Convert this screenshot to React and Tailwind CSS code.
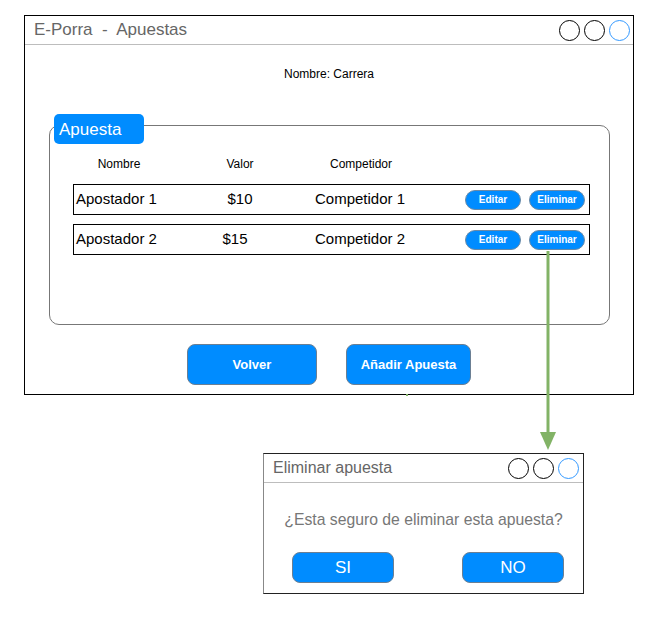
import React from 'react';

const rows = [
  { name: 'Apostador 1', value: '$10', comp: 'Competidor 1', shift: '' },
  { name: 'Apostador 2', value: '$15', comp: 'Competidor 2', shift: 'pr-[10px]' },
];

function WindowDots() {
  return (
    <div className="flex items-center gap-[4px]">
      <span className="w-[21px] h-[21px] rounded-full border border-black" />
      <span className="w-[21px] h-[21px] rounded-full border border-black" />
      <span className="w-[21px] h-[21px] rounded-full border border-[#3399ff]" />
    </div>
  );
}

function SmallBtn({ children, w }) {
  return (
    <button className={`${w} h-[20px] rounded-full bg-[#008cff] border border-[#6b8aa6] text-white text-[10px] font-bold leading-none`}>
      {children}
    </button>
  );
}

export default function App() {
  return (
    <div className="relative w-[650px] h-[639px] bg-white font-['Liberation_Sans',Arial,sans-serif]">
      {/* Main window */}
      <div className="ml-[24px] pt-[15px]">
        <div className="w-[610px] h-[380px] border border-black flex flex-col">
          <div className="h-[29px] border-b border-[#bdbdbd] flex items-center justify-between pl-[9px] pr-[3px] shrink-0">
            <span className="text-[17px] text-[#666] whitespace-pre">E-Porra  -  Apuestas</span>
            <WindowDots />
          </div>

          <div className="text-[12px] text-black text-center mt-[22px] leading-[14px]">Nombre: Carrera</div>

          {/* Group box */}
          <div className="relative ml-[24px] mt-[44px] w-[561px] h-[200px] border border-[#777] rounded-[10px]">
            <div className="absolute left-[4px] top-[-12px] w-[90px] h-[30px] rounded-[5px] bg-[#008cff] text-white text-[17px] flex items-center pl-[5px] pt-[1px]">
              Apuesta
            </div>

            <div className="flex ml-[23px] mt-[31px] text-[12px] text-black leading-[14px]">
              <span className="w-[92px] text-center">Nombre</span>
              <span className="w-[150px] text-center">Valor</span>
              <span className="w-[92px] text-center">Competidor</span>
            </div>

            <div className="flex flex-col gap-[9px] ml-[23px] mt-[13px]">
              {rows.map((r, i) => (
                <div key={i} className="w-[517px] h-[31px] border border-black flex items-center text-[15px] text-black">
                  <span className="w-[119px] pl-[2px]">{r.name}</span>
                  <span className={`w-[94px] text-center ${r.shift}`}>{r.value}</span>
                  <span className="w-[146px] text-center">{r.comp}</span>
                  <div className="ml-[32px] flex gap-[8px]">
                    <SmallBtn w="w-[56px]">Editar</SmallBtn>
                    <SmallBtn w="w-[56px]">Eliminar</SmallBtn>
                  </div>
                </div>
              ))}
            </div>
          </div>

          <div className="flex justify-center gap-[29px] mt-[19px]">
            <button className="w-[130px] h-[41px] rounded-[8px] bg-[#008cff] border border-[#6b7f93] text-white text-[13px] font-bold">
              Volver
            </button>
            <button className="w-[125px] h-[41px] rounded-[8px] bg-[#008cff] border border-[#6b7f93] text-white text-[13px] font-bold">
              Añadir Apuesta
            </button>
          </div>
        </div>
      </div>

      {/* Dialog */}
      <div className="ml-[263px] mt-[58px] w-[321px] h-[141px] border border-[#222] border-l-[#888] flex flex-col">
        <div className="h-[29px] border-b border-[#bdbdbd] flex items-center justify-between pl-[9px] pr-[4px] shrink-0">
          <span className="text-[16px] text-[#666]">Eliminar apuesta</span>
          <WindowDots />
        </div>
        <div className="text-[15.75px] text-[#777] text-center mt-[28px] leading-[18px]">¿Esta seguro de eliminar esta apuesta?</div>
        <div className="flex ml-[28px] gap-[68px] mt-[23px]">
          <button className="w-[102px] h-[31px] rounded-[8px] bg-[#008cff] border border-[#6b7f93] text-white text-[17px]">SI</button>
          <button className="w-[102px] h-[31px] rounded-[8px] bg-[#008cff] border border-[#6b7f93] text-white text-[17px]">NO</button>
        </div>
      </div>

      {/* Connector arrow */}
      <svg className="absolute left-0 top-0 pointer-events-none" width="650" height="639">
        <line x1="548" y1="251" x2="548" y2="436" stroke="#82b366" strokeWidth="3" />
        <polygon points="540,432 556,432 548,450" fill="#82b366" />
        <rect x="406" y="394" width="2" height="2" fill="#82b366" />
      </svg>
    </div>
  );
}
